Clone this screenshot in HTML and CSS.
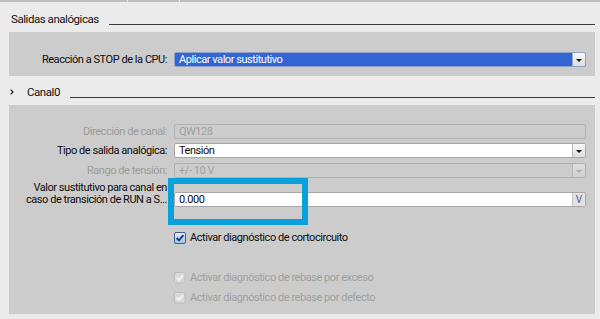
FILE: index.html
```html
<!DOCTYPE html>
<html lang="es">
<head>
<meta charset="utf-8">
<title>Salidas analógicas</title>
<link rel="stylesheet" href="styles.css">
</head>
<body>
<div class="topbar"><span class="tick t1"></span><span class="tick t2"></span></div>

<div class="sec-head">
  <span class="sec-title">Salidas analógicas</span>
  <span class="sec-line"></span>
</div>

<div class="panel panel-stop">
  <div class="row">
    <label class="lbl">Reacción a STOP de la CPU:</label>
    <div class="field sel-blue">
      <span class="val">Aplicar valor sustitutivo</span>
      <span class="drop"><span class="tri"></span></span>
    </div>
  </div>
</div>

<div class="sec-head sec-head2">
  <svg class="chev" width="4" height="6" viewBox="0 0 4 6"><path d="M0.6 0.6 L3 3 L0.6 5.4" fill="none" stroke="#222" stroke-width="1.3"/></svg>
  <span class="sec-title">Canal0</span>
  <span class="sec-line"></span>
</div>

<div class="panel panel-ch">
  <div class="row r1">
    <label class="lbl dis">Dirección de canal:</label>
    <div class="field disabled"><span class="val">QW128</span></div>
  </div>
  <div class="row r2">
    <label class="lbl">Tipo de salida analógica:</label>
    <div class="field">
      <span class="val">Tensión</span>
      <span class="drop"><span class="tri"></span></span>
    </div>
  </div>
  <div class="row r3">
    <label class="lbl dis">Rango de tensión:</label>
    <div class="field disabled">
      <span class="val">+/- 10 V</span>
      <span class="drop drop-dis"><span class="tri"></span></span>
    </div>
  </div>
  <div class="row r4">
    <label class="lbl lbl2">Valor sustitutivo para canal en<br>caso de transición de RUN a S...</label>
    <div class="field">
      <span class="val">0.000</span>
      <span class="unit">V</span>
    </div>
  </div>

  <div class="check-row c1">
    <svg class="cb" width="12" height="12" viewBox="0 0 12 12">
      <defs><linearGradient id="cbg" x1="0" y1="0" x2="0" y2="1"><stop offset="0" stop-color="#e4eefb"/><stop offset="1" stop-color="#9fbfe8"/></linearGradient></defs>
      <rect x="0.5" y="0.5" width="11" height="11" rx="1.5" fill="url(#cbg)" stroke="#3d5d8f"/>
      <path d="M2.6 6 L5 8.4 L9.4 3.2" fill="none" stroke="#173c85" stroke-width="1.9"/>
    </svg>
    <span>Activar diagnóstico de cortocircuito</span>
  </div>
  <div class="check-row dis c2">
    <svg class="cb" width="12" height="12" viewBox="0 0 12 12">
      <rect x="0.5" y="0.5" width="10.5" height="10.5" rx="1.5" fill="#d9d9d9" stroke="#bcbcbc"/>
      <path d="M2.6 5.8 L4.8 8 L8.8 3.2" fill="none" stroke="#f4f4f4" stroke-width="1.8"/>
    </svg>
    <span>Activar diagnóstico de rebase por exceso</span>
  </div>
  <div class="check-row dis c3">
    <svg class="cb" width="12" height="12" viewBox="0 0 12 12">
      <rect x="0.5" y="0.5" width="10.5" height="10.5" rx="1.5" fill="#d9d9d9" stroke="#bcbcbc"/>
      <path d="M2.6 5.8 L4.8 8 L8.8 3.2" fill="none" stroke="#f4f4f4" stroke-width="1.8"/>
    </svg>
    <span>Activar diagnóstico de rebase por defecto</span>
  </div>

  <div class="highlight"></div>
</div>
</body>
</html>
```
FILE: styles.css
```css
* { box-sizing: border-box; }
html, body { margin: 0; padding: 0; }
body {
  width: 600px;
  height: 319px;
  overflow: hidden;
  background: #ebebeb;
  font-family: Roboto, "Liberation Sans", sans-serif;
  font-size: 11px;
  letter-spacing: -0.45px;
  color: #0d0d0d;
}
.topbar {
  height: 2px;
  background: #bdbdbd;
  position: relative;
}
.tick {
  position: absolute;
  top: 0;
  width: 1px;
  height: 2px;
  background: #e6e6e6;
}
.t1 { left: 127px; }
.t2 { left: 179px; }

.sec-head {
  display: flex;
  height: 30px;
  padding: 0 5px 0 11px;
}
.sec-title {
  font-size: 11.5px;
  line-height: 14px;
  margin-top: 10px;
  color: #111;
}
.sec-line {
  flex: 1;
  height: 1px;
  background: #3a3a3a;
  margin-top: 22px;
  margin-left: 10px;
}
.sec-head2 {
  height: 29px;
  padding-left: 10px;
}
.sec-head2 .chev { margin-top: 13px; margin-right: 13px; }
.sec-head2 .sec-title { margin-top: 9px; }
.sec-head2 .sec-line { margin-top: 21px; margin-left: 10px; }

.panel {
  margin: 0 5px 0 9px;
  background: #cccccc;
  padding-right: 9px;
}
.panel-stop {
  height: 44px;
  padding-top: 20px;
}
.panel-ch {
  position: relative;
  height: 209px;
  padding-top: 19px;
}

.row {
  display: grid;
  grid-template-columns: 158px 1fr;
  column-gap: 7px;
  align-items: center;
}
.lbl {
  text-align: right;
  line-height: 15px;
  white-space: nowrap;
}
.lbl.dis { color: #9c9c9c; }
.r1 { margin-bottom: 4px; }
.r2 { margin-bottom: 5px; }
.r3 { margin-bottom: 4px; }
.r4 {
  height: 25px;
  align-items: start;
}
.r4 .lbl2 {
  line-height: 12px;
}
.r4 .field { margin-top: 10px; }

.field {
  display: flex;
  align-items: center;
  height: 15px;
  border: 1px solid #a8a8a8;
  border-radius: 2px;
  background: #ffffff;
  overflow: hidden;
}
.field .val {
  flex: 1;
  padding-left: 4px;
  line-height: 13px;
  white-space: nowrap;
}
.field.disabled {
  background: #cccccc;
  border-color: #b2b2b2;
  color: #a0a0a0;
}
.sel-blue {
  background: #3366d3;
  border-color: #8ea2c9;
  color: #ffffff;
}
.drop {
  width: 13px;
  height: 13px;
  display: flex;
  align-items: center;
  justify-content: center;
  border-left: 1px solid #b6b6b6;
  background: linear-gradient(#f7f7f7, #dedede);
}
.sel-blue .drop { border-left-color: #9aaad0; }
.tri {
  width: 0;
  height: 0;
  border-left: 3px solid transparent;
  border-right: 3px solid transparent;
  border-top: 3px solid #111;
  margin-top: 1px;
}
.drop-dis { background: linear-gradient(#dcdcdc, #d2d2d2); }
.drop-dis .tri { border-top-color: #a9a9a9; }
.unit {
  width: 13px;
  height: 13px;
  border-left: 1px solid #c4c4c4;
  background: #e2e2e2;
  color: #4a5d7e;
  font-size: 10px;
  line-height: 13px;
  letter-spacing: 0;
  text-align: center;
}

.check-row {
  display: flex;
  align-items: center;
  gap: 4px;
  height: 13px;
  padding-left: 165px;
  line-height: 13px;
  white-space: nowrap;
}
.check-row.dis { color: #a0a0a0; }
.c1 { margin-top: 24px; }
.c2 { margin-top: 27px; }
.c3 { margin-top: 7px; }
.cb { flex: none; }

.highlight {
  position: absolute;
  left: 159px;
  top: 73px;
  width: 140px;
  height: 47px;
  border: 6px solid #0aa0dc;
}
```
